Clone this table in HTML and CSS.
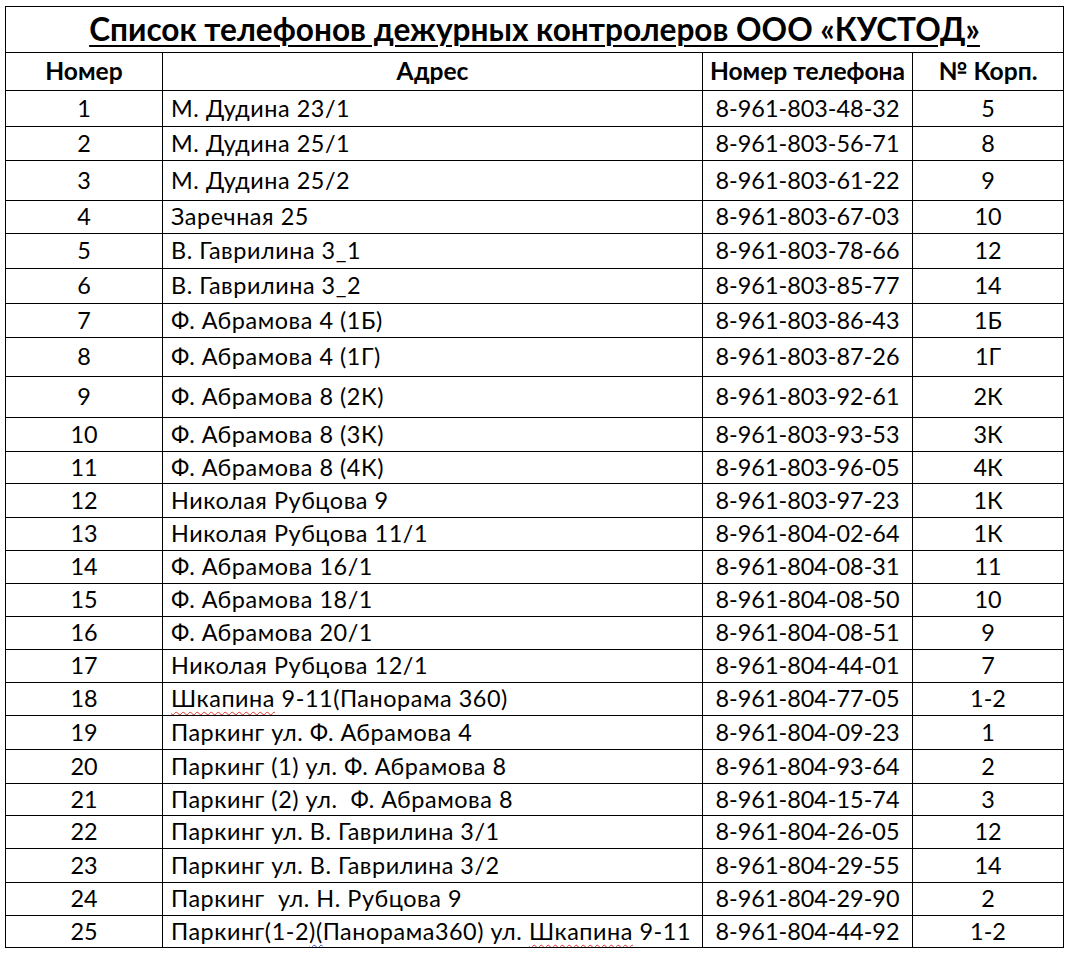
FILE: index.html
```html
<!DOCTYPE html>
<html lang="ru">
<head>
<meta charset="utf-8">
<title>Список телефонов</title>
<link rel="stylesheet" href="styles.css">
</head>
<body>
<table class="sheet">
  <colgroup>
    <col class="c-num"><col class="c-addr"><col class="c-tel"><col class="c-korp">
  </colgroup>
  <tr class="title-row"><td colspan="4" class="title"><span>Список телефонов дежурных контролеров ООО «КУСТОД»</span></td></tr>
  <tr class="head-row"><th>Номер</th><th>Адрес</th><th>Номер телефона</th><th>№ Корп.</th></tr>
  <tr class="h36"><td>1</td><td class="addr">М. Дудина 23/1</td><td>8-961-803-48-32</td><td>5</td></tr>
  <tr class="h34"><td>2</td><td class="addr">М. Дудина 25/1</td><td>8-961-803-56-71</td><td>8</td></tr>
  <tr class="h40"><td>3</td><td class="addr">М. Дудина 25/2</td><td>8-961-803-61-22</td><td>9</td></tr>
  <tr class="h33"><td>4</td><td class="addr">Заречная 25</td><td>8-961-803-67-03</td><td>10</td></tr>
  <tr class="h35"><td>5</td><td class="addr">В. Гаврилина 3_1</td><td>8-961-803-78-66</td><td>12</td></tr>
  <tr class="h35"><td>6</td><td class="addr">В. Гаврилина 3_2</td><td>8-961-803-85-77</td><td>14</td></tr>
  <tr class="h34"><td>7</td><td class="addr">Ф. Абрамова 4 (1Б)</td><td>8-961-803-86-43</td><td>1Б</td></tr>
  <tr class="h39"><td>8</td><td class="addr">Ф. Абрамова 4 (1Г)</td><td>8-961-803-87-26</td><td>1Г</td></tr>
  <tr class="h41"><td>9</td><td class="addr">Ф. Абрамова 8 (2К)</td><td>8-961-803-92-61</td><td>2К</td></tr>
  <tr class="h34"><td>10</td><td class="addr">Ф. Абрамова 8 (3К)</td><td>8-961-803-93-53</td><td>3К</td></tr>
  <tr class="h32"><td>11</td><td class="addr">Ф. Абрамова 8 (4К)</td><td>8-961-803-96-05</td><td>4К</td></tr>
  <tr class="h34"><td>12</td><td class="addr">Николая Рубцова 9</td><td>8-961-803-97-23</td><td>1К</td></tr>
  <tr class="h33"><td>13</td><td class="addr">Николая Рубцова 11/1</td><td>8-961-804-02-64</td><td>1К</td></tr>
  <tr class="h33"><td>14</td><td class="addr">Ф. Абрамова 16/1</td><td>8-961-804-08-31</td><td>11</td></tr>
  <tr class="h33"><td>15</td><td class="addr">Ф. Абрамова 18/1</td><td>8-961-804-08-50</td><td>10</td></tr>
  <tr class="h33"><td>16</td><td class="addr">Ф. Абрамова 20/1</td><td>8-961-804-08-51</td><td>9</td></tr>
  <tr class="h33"><td>17</td><td class="addr">Николая Рубцова 12/1</td><td>8-961-804-44-01</td><td>7</td></tr>
  <tr class="h33"><td>18</td><td class="addr"><span class="spell">Шкапина</span> 9-11(Панорама 360)</td><td>8-961-804-77-05</td><td>1-2</td></tr>
  <tr class="h34"><td>19</td><td class="addr">Паркинг ул. Ф. Абрамова 4</td><td>8-961-804-09-23</td><td>1</td></tr>
  <tr class="h34"><td>20</td><td class="addr">Паркинг (1) ул. Ф. Абрамова 8</td><td>8-961-804-93-64</td><td>2</td></tr>
  <tr class="h32"><td>21</td><td class="addr">Паркинг (2) ул.&nbsp; Ф. Абрамова 8</td><td>8-961-804-15-74</td><td>3</td></tr>
  <tr class="h33"><td>22</td><td class="addr">Паркинг ул. В. Гаврилина 3/1</td><td>8-961-804-26-05</td><td>12</td></tr>
  <tr class="h34"><td>23</td><td class="addr">Паркинг ул. В. Гаврилина 3/2</td><td>8-961-804-29-55</td><td>14</td></tr>
  <tr class="h33"><td>24</td><td class="addr">Паркинг&nbsp; ул. Н. Рубцова 9</td><td>8-961-804-29-90</td><td>2</td></tr>
  <tr class="h32"><td>25</td><td class="addr">Паркинг(1-2<span class="gram">)(</span>Панорама360) ул. <span class="spell">Шкапина</span> 9-11</td><td>8-961-804-44-92</td><td>1-2</td></tr>
</table>
</body>
</html>
```

FILE: styles.css
```css
html, body {
  margin: 0;
  padding: 0;
  background: #ffffff;
}

body {
  padding: 6px 0 0 5px;
  font-family: "Lato", "Noto Sans", "Liberation Sans", sans-serif;
  color: #000;
}

.sheet {
  border-collapse: collapse;
  table-layout: fixed;
  width: 1058px;
}

.c-num { width: 157px; }
.c-addr { width: 540px; }
.c-tel { width: 210px; }
.c-korp { width: 151px; }

.sheet td,
.sheet th {
  border: 1px solid #000;
  padding: 0;
  text-align: center;
  vertical-align: middle;
  font-size: 23.4px;
  font-weight: 400;
  line-height: 1;
  white-space: nowrap;
  overflow: hidden;
}

.sheet th {
  font-weight: 700;
  font-size: 24.6px;
}

.sheet td.addr {
  text-align: left;
  padding-left: 8px;
  letter-spacing: 0.55px;
}

.title-row td { height: 45px; }
.head-row th { height: 37px; }

.sheet td.title {
  font-size: 31.6px;
  font-weight: 700;
}

.title span {
  text-decoration: underline;
  text-decoration-thickness: 2px;
  text-underline-offset: 4px;
}

.h32 td { height: 31px; }
.h33 td { height: 32px; }
.h34 td { height: 33px; }
.h35 td { height: 34px; }
.h36 td { height: 35px; }
.h39 td { height: 38px; }
.h40 td { height: 39px; }
.h41 td { height: 40px; }

.spell {
  text-decoration: underline wavy #e0302a;
  text-decoration-thickness: 1px;
  text-underline-offset: 4px;
  text-decoration-skip-ink: none;
}

.gram {
  text-decoration: underline wavy #3a4fd0;
  text-decoration-thickness: 1px;
  text-underline-offset: 4px;
  text-decoration-skip-ink: none;
}
```
